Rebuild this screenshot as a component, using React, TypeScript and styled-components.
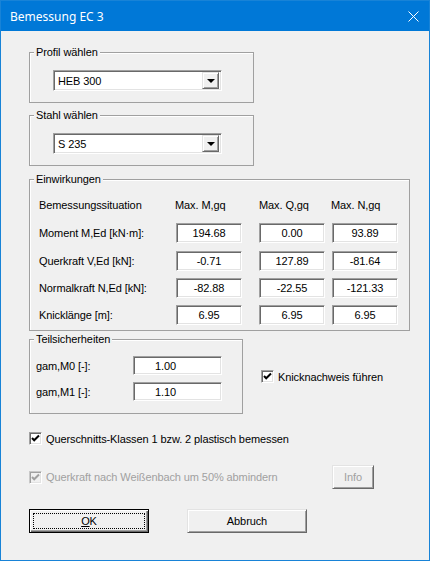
import React from 'react';
import styled, { createGlobalStyle, css } from 'styled-components';

const GlobalStyle = createGlobalStyle`
  html, body {
    margin: 0;
    padding: 0;
    background: #ffffff;
  }
  body {
    font-family: "Liberation Sans", Arial, sans-serif;
    font-size: 11px;
    letter-spacing: -0.1px;
    color: #000;
  }
`;

const Window = styled.div`
  width: 430px;
  height: 561px;
  box-sizing: border-box;
  border: 1px solid #1883d7;
  background: #f0f0f0;
  display: flex;
  flex-direction: column;
`;

const TitleBar = styled.div`
  height: 30px;
  flex: none;
  background: #0078d7;
  color: #fff;
  display: flex;
  align-items: center;
  justify-content: space-between;
  padding: 0 10px 0 9px;
  font-family: "Noto Sans", "Open Sans", sans-serif;
  font-size: 12px;
  letter-spacing: 0;
`;

const Body = styled.div`
  padding: 0 0 0 28px;
  display: flex;
  flex-direction: column;
  align-items: flex-start;
`;

const Group = styled.div<{ $w: number; $h: number; $mt: number }>`
  position: relative;
  box-sizing: border-box;
  width: ${p => p.$w}px;
  height: ${p => p.$h}px;
  margin-top: ${p => p.$mt}px;
  border: 1px solid #a0a0a0;
  box-shadow: inset 1px 1px 0 #fff;
`;

const Caption = styled.span`
  position: absolute;
  top: -8px;
  left: 4px;
  padding: 0 2px 0 2px;
  line-height: 14px;
  background: #f0f0f0;
`;

const ComboWrap = styled.div`
  padding: 17px 0 0 23px;
`;

const sunken = css`
  box-sizing: border-box;
  border: 1px solid;
  border-color: #a0a0a0 #fff #fff #a0a0a0;
  box-shadow: inset 1px 1px 0 #696969, inset -1px -1px 0 #e3e3e3;
  background: #fff;
`;

const raised = css`
  box-sizing: border-box;
  border: 1px solid;
  border-color: #e3e3e3 #696969 #696969 #e3e3e3;
  box-shadow: inset 1px 1px 0 #fff, inset -1px -1px 0 #a0a0a0;
  background: #f0f0f0;
`;

const Combo = styled.div`
  ${sunken};
  width: 169px;
  height: 21px;
  display: flex;
  align-items: center;
  padding: 2px;
`;

const ComboText = styled.span`
  flex: 1;
  padding-left: 2px;
`;

const ComboButton = styled.div`
  ${raised};
  width: 17px;
  height: 17px;
  display: flex;
  align-items: center;
  justify-content: center;
`;

const Arrow = styled.span`
  width: 0;
  height: 0;
  border-left: 4px solid transparent;
  border-right: 4px solid transparent;
  border-top: 4px solid #000;
  margin-top: 1px;
`;

const LoadGrid = styled.div`
  display: grid;
  grid-template-columns: 137px 83px 73px 66px;
  grid-template-rows: 22px repeat(4, 20px);
  row-gap: 7.33px;
  padding: 14px 0 0 9px;
  align-items: center;
`;

const HeadCell = styled.span<{ $shift?: number }>`
  margin-left: ${p => p.$shift ?? 0}px;
`;

const Field = styled.div<{ $w: number; $h: number; $align?: 'center' | 'left'; $pad?: number }>`
  ${sunken};
  width: ${p => p.$w}px;
  height: ${p => p.$h}px;
  display: flex;
  align-items: center;
  justify-content: ${p => (p.$align === 'left' ? 'flex-start' : 'center')};
  padding-left: ${p => p.$pad ?? 0}px;
`;

const SafetyRow = styled.div`
  display: flex;
  align-items: center;
  gap: 18px;
  margin-top: 8px;
`;

const SafetyGrid = styled.div`
  display: grid;
  grid-template-columns: 97px 89px;
  grid-template-rows: 19px 19px;
  row-gap: 7px;
  padding: 16px 0 0 6px;
  align-items: center;
`;

const CheckRow = styled.label<{ $mt?: number; $disabled?: boolean }>`
  display: flex;
  align-items: center;
  gap: 4px;
  height: 13px;
  margin-top: ${p => p.$mt ?? 0}px;
  color: ${p => (p.$disabled ? '#a0a0a0' : '#000')};
`;

const Box = styled.span<{ $disabled?: boolean }>`
  ${sunken};
  width: 13px;
  height: 13px;
  display: flex;
  align-items: center;
  justify-content: center;
  background: ${p => (p.$disabled ? '#f0f0f0' : '#fff')};
  ${p =>
    p.$disabled &&
    css`
      border-color: #c8c8c8 #fff #fff #c8c8c8;
      box-shadow: inset 1px 1px 0 #a0a0a0, inset -1px -1px 0 #e3e3e3;
    `}
`;

const OptionRow = styled.div`
  width: 345px;
  display: flex;
  align-items: center;
  justify-content: space-between;
  margin-top: 20px;
`;

const ButtonRow = styled.div`
  display: flex;
  gap: 38px;
  margin-top: 20px;
`;

const Button = styled.div<{ $w: number; $default?: boolean; $disabled?: boolean }>`
  ${raised};
  position: relative;
  width: ${p => p.$w}px;
  height: 24px;
  display: flex;
  align-items: center;
  justify-content: center;
  color: ${p => (p.$disabled ? '#a0a0a0' : '#000')};
  ${p =>
    p.$default &&
    css`
      border: 1px solid #000;
      box-shadow: inset 1px 1px 0 #fff, inset -1px -1px 0 #696969, inset -2px -2px 0 #a0a0a0;
      &::after {
        content: '';
        position: absolute;
        inset: 3px;
        border: 1px dotted #000;
      }
    `}
`;

const Check: React.FC<{ color?: string }> = ({ color = '#000' }) => (
  <svg width="9" height="9" viewBox="0 0 9 9">
    <path d="M1 4 L3.2 6.3 L8 1.5" fill="none" stroke={color} strokeWidth="2" />
  </svg>
);

const Close: React.FC = () => (
  <svg width="11" height="11" viewBox="0 0 11 11">
    <path d="M0.5 0.5 L10.5 10.5 M10.5 0.5 L0.5 10.5" stroke="#fff" strokeWidth="1" />
  </svg>
);

const loads = [
  ['Moment M,Ed [kN·m]:', '194.68', '0.00', '93.89'],
  ['Querkraft V,Ed [kN]:', '-0.71', '127.89', '-81.64'],
  ['Normalkraft N,Ed [kN]:', '-82.88', '-22.55', '-121.33'],
  ['Knicklänge [m]:', '6.95', '6.95', '6.95'],
];

export default function App() {
  return (
    <>
      <GlobalStyle />
      <Window>
        <TitleBar>
          <span>Bemessung EC 3</span>
          <Close />
        </TitleBar>
        <Body>
          <Group $w={225} $h={51} $mt={21}>
            <Caption>Profil wählen</Caption>
            <ComboWrap>
              <Combo>
                <ComboText>HEB 300</ComboText>
                <ComboButton><Arrow /></ComboButton>
              </Combo>
            </ComboWrap>
          </Group>

          <Group $w={225} $h={51} $mt={12}>
            <Caption>Stahl wählen</Caption>
            <ComboWrap>
              <Combo>
                <ComboText>S 235</ComboText>
                <ComboButton><Arrow /></ComboButton>
              </Combo>
            </ComboWrap>
          </Group>

          <Group $w={381} $h={152} $mt={13}>
            <Caption>Einwirkungen</Caption>
            <LoadGrid>
              <span>Bemessungssituation</span>
              <HeadCell $shift={-1}>Max. M,gq</HeadCell>
              <HeadCell>Max. Q,gq</HeadCell>
              <HeadCell $shift={-1}>Max. N,gq</HeadCell>
              {loads.map(row => (
                <React.Fragment key={row[0]}>
                  <span>{row[0]}</span>
                  <Field $w={66} $h={20}>{row[1]}</Field>
                  <Field $w={66} $h={20}>{row[2]}</Field>
                  <Field $w={66} $h={20}>{row[3]}</Field>
                </React.Fragment>
              ))}
            </LoadGrid>
          </Group>

          <SafetyRow>
            <Group $w={214} $h={75} $mt={0}>
              <Caption>Teilsicherheiten</Caption>
              <SafetyGrid>
                <span>gam,M0 [-]:</span>
                <Field $w={89} $h={19} $align="left" $pad={21}>1.00</Field>
                <span>gam,M1 [-]:</span>
                <Field $w={89} $h={19} $align="left" $pad={21}>1.10</Field>
              </SafetyGrid>
            </Group>
            <CheckRow>
              <Box><Check /></Box>
              Knicknachweis führen
            </CheckRow>
          </SafetyRow>

          <CheckRow $mt={18}>
            <Box><Check /></Box>
            Querschnitts-Klassen 1 bzw. 2 plastisch bemessen
          </CheckRow>

          <OptionRow>
            <CheckRow $disabled>
              <Box $disabled><Check color="#a0a0a0" /></Box>
              Querkraft nach Weißenbach um 50% abmindern
            </CheckRow>
            <Button $w={42} $disabled>Info</Button>
          </OptionRow>

          <ButtonRow>
            <Button $w={120} $default><span><u>O</u>K</span></Button>
            <Button $w={120}>Abbruch</Button>
          </ButtonRow>
        </Body>
      </Window>
    </>
  );
}
